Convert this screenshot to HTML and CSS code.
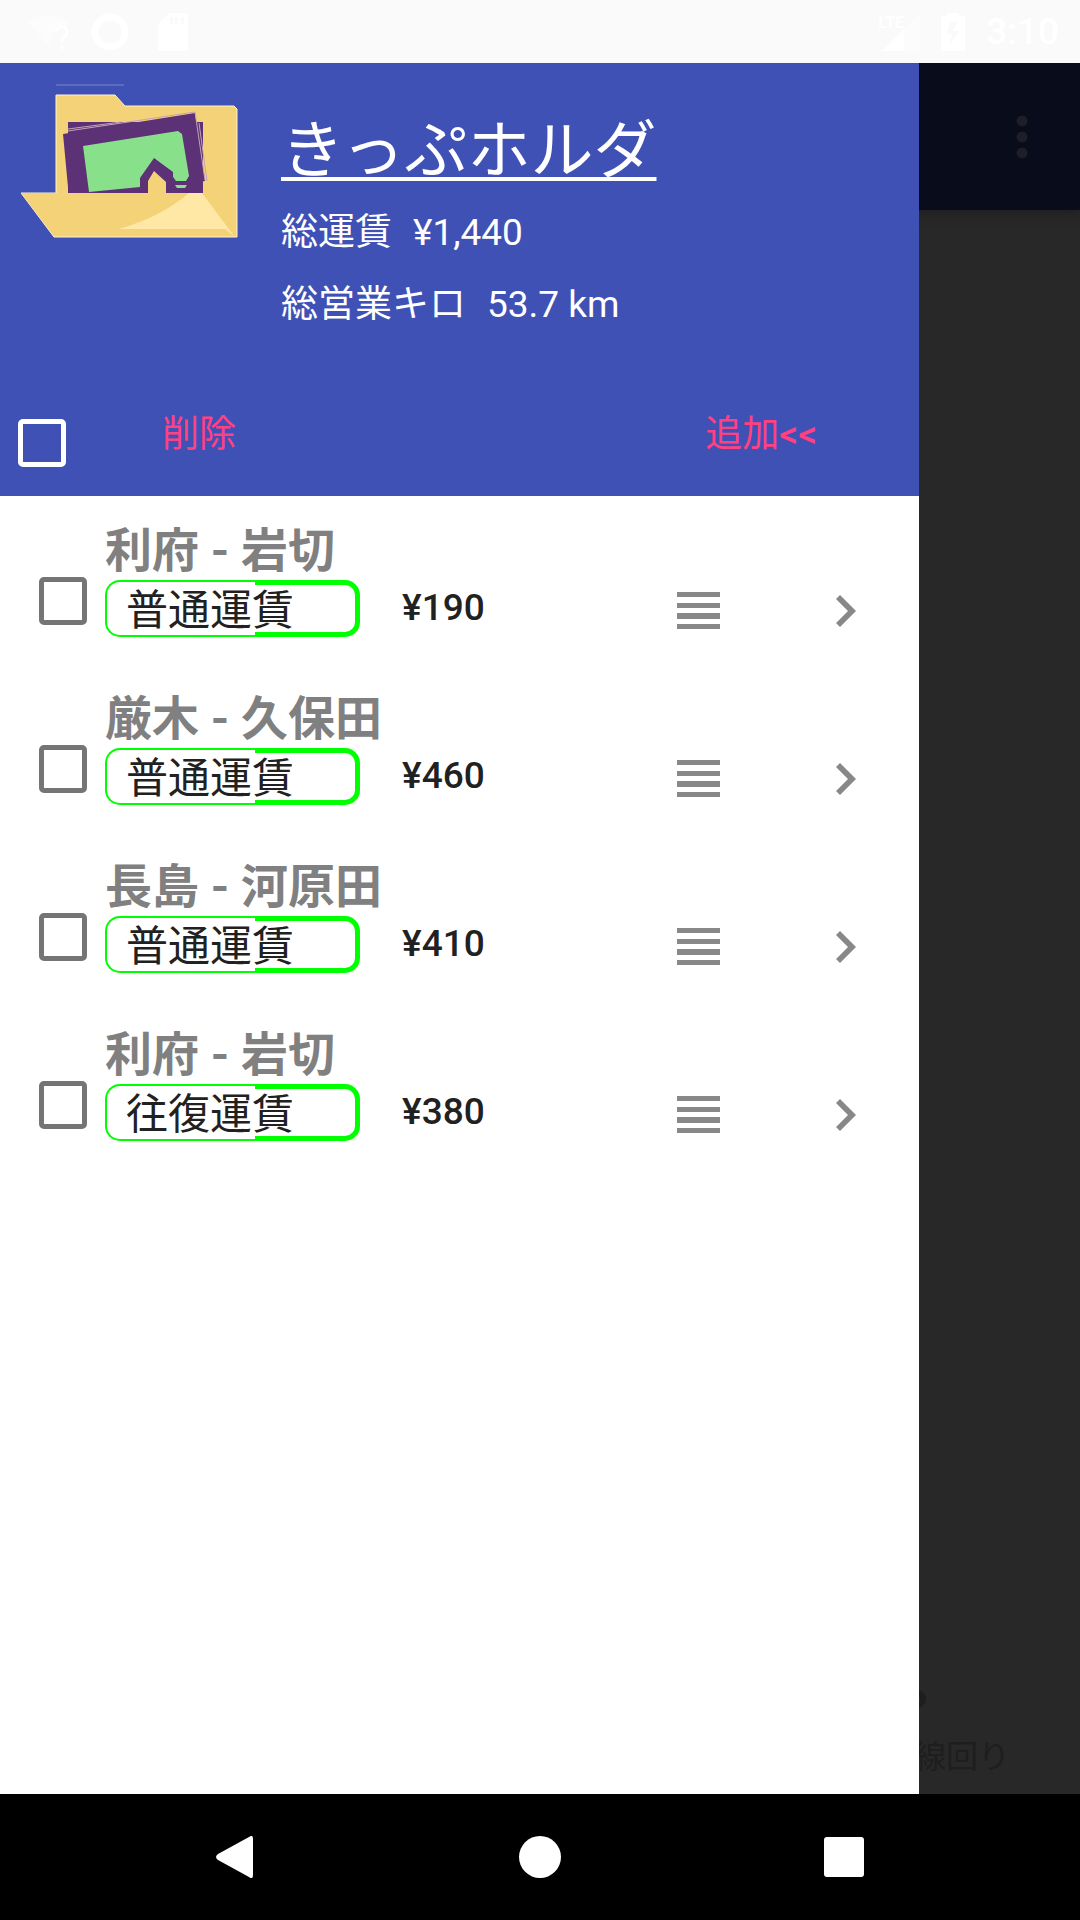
FILE: index.html
```html
<!DOCTYPE html>
<html lang="ja">
<head>
<meta charset="utf-8">
<meta name="viewport" content="width=device-width, initial-scale=1">
<title>きっぷホルダ</title>
<link rel="stylesheet" href="styles.css">
</head>
<body>
<svg class="defs" width="0" height="0" aria-hidden="true">
  <symbol id="handle" viewBox="0 0 43 38"><path d="M0 0h43v5H0zM0 11h43v5H0zM0 21h43v6H0zM0 32h43v5H0z"/></symbol>
  <symbol id="chevron" viewBox="0 0 20 32"><path d="M4 0 20 16 4 32 0 28 12 16 0 4z"/></symbol>
</svg>

<header class="status">
  <div class="status-group status-left">
    <svg width="42" height="36" viewBox="0 0 42 36"><path d="M0 8Q20-5 40 8L36 13Q27 10 26 20L20 32z" opacity=".4"/><path d="M28 18q1-5 6-5t5 5q0 3-3 5t-2 5M34 31v4" fill="none" stroke="#fff" stroke-width="3"/></svg>
    <svg width="38" height="38" viewBox="0 0 38 38"><circle cx="19" cy="19" r="15" fill="none" stroke="#fff" stroke-width="7"/></svg>
    <svg class="sd-card" width="30" height="38" viewBox="0 0 30 38"><path fill-rule="evenodd" d="M11 0h16q3 0 3 3v32q0 3-3 3H3q-3 0-3-3V11zM12 4v7h3V4zM17 4v7h3V4zM23 4v7h3V4z"/></svg>
  </div>
  <div class="status-group status-right">
    <span class="signal"><span class="lte">LTE</span><svg width="38" height="38" viewBox="0 0 38 38"><path d="M38 0v38H0z" opacity=".4"/><path d="M22 16v22H0z"/></svg></span>
    <svg width="24" height="38" viewBox="0 0 24 38"><path fill-rule="evenodd" d="M6 0h12v3h6v35H0V3h6zM9 9 6 21h5L8 33 18 18h-6l5-9z"/></svg>
    <time class="clock">3:10</time>
  </div>
</header>

<div class="app">
  <div class="page">
    <div class="toolbar">
      <button class="icon-button" type="button" aria-label="メニュー"><svg width="12" height="44" viewBox="0 0 12 44"><circle cx="6" cy="6" r="5.500"/><circle cx="6" cy="22" r="5.500"/><circle cx="6" cy="38" r="5.500"/></svg></button>
    </div>
    <div class="page-foot">
      <svg class="option-dot" width="18" height="18" viewBox="0 0 18 18"><circle cx="9" cy="9" r="6" fill="none" stroke-width="6"/></svg>
      <span>線回り</span>
    </div>
  </div>

  <aside class="drawer">
    <div class="drawer-head">
      <div class="summary">
        <svg class="folder" width="219" height="160" viewBox="0 0 219 160">
          <path d="M35 2h68" stroke="#5c6bc0" stroke-width="2"/>
          <path d="M35 12H94l10 11H213l3 3V154H33L0 110H35z" fill="#f4d277" stroke="#fff3cf" stroke-width="1"/>
          <path d="M47 39H182V110H47z" fill="#5d3175"/>
          <path d="M42 51 174 30 184 98 150 104H47z" fill="#5d3175"/>
          <path d="M47 48 174 29 184 97M47 46 100 39M178 40 186 98" fill="none" stroke="#c4a5b4" stroke-width="1"/>
          <path d="M62 63 157 48 161 51 168 93 165 98H155L150 91 134 76 120 94 119 104 68 109z" fill="#89e08a"/>
          <path d="M154 102h12l-2 3h-8z" fill="#89e08a"/>
          <path d="M119 109V95L133 75 152 89V103L146 109V98L134 87 127 99V109z" fill="#5d3175"/>
          <path d="M127 110V98L133 88 145 99V110z" fill="#f4d277"/>
          <path d="M33 153 0 110H181L216 153z" fill="#f4d277"/>
          <path d="M98 146Q140 134 168 110H181L213 153 204 146z" fill="#ffe8a5"/>
        </svg>
        <div class="totals">
          <h1>きっぷホルダ</h1>
          <p><span>総運賃</span><span>¥1,440</span></p>
          <p><span>総営業キロ</span><span>53.7 km</span></p>
        </div>
      </div>
      <div class="actions">
        <input class="check check-light" type="checkbox" aria-label="すべて選択">
        <button class="text-button" type="button">削除</button>
        <button class="text-button text-button-end" type="button">追加<span class="arrows">&lt;&lt;</span></button>
      </div>
    </div>

    <ul class="tickets">
      <li class="ticket">
        <input class="check" type="checkbox" id="t1">
        <label class="route" for="t1">利府 - 岩切</label>
        <div class="fare-line">
          <span class="badge">普通運賃</span>
          <span class="price">¥190</span>
          <button class="icon-button" type="button" aria-label="並べ替え"><svg width="43" height="38"><use href="#handle"/></svg></button>
          <button class="icon-button" type="button" aria-label="開く"><svg width="20" height="32"><use href="#chevron"/></svg></button>
        </div>
      </li>
      <li class="ticket">
        <input class="check" type="checkbox" id="t2">
        <label class="route" for="t2">厳木 - 久保田</label>
        <div class="fare-line">
          <span class="badge">普通運賃</span>
          <span class="price">¥460</span>
          <button class="icon-button" type="button" aria-label="並べ替え"><svg width="43" height="38"><use href="#handle"/></svg></button>
          <button class="icon-button" type="button" aria-label="開く"><svg width="20" height="32"><use href="#chevron"/></svg></button>
        </div>
      </li>
      <li class="ticket">
        <input class="check" type="checkbox" id="t3">
        <label class="route" for="t3">長島 - 河原田</label>
        <div class="fare-line">
          <span class="badge">普通運賃</span>
          <span class="price">¥410</span>
          <button class="icon-button" type="button" aria-label="並べ替え"><svg width="43" height="38"><use href="#handle"/></svg></button>
          <button class="icon-button" type="button" aria-label="開く"><svg width="20" height="32"><use href="#chevron"/></svg></button>
        </div>
      </li>
      <li class="ticket">
        <input class="check" type="checkbox" id="t4">
        <label class="route" for="t4">利府 - 岩切</label>
        <div class="fare-line">
          <span class="badge">往復運賃</span>
          <span class="price">¥380</span>
          <button class="icon-button" type="button" aria-label="並べ替え"><svg width="43" height="38"><use href="#handle"/></svg></button>
          <button class="icon-button" type="button" aria-label="開く"><svg width="20" height="32"><use href="#chevron"/></svg></button>
        </div>
      </li>
    </ul>
  </aside>
</div>

<nav class="navbar">
  <button class="icon-button" type="button" aria-label="戻る"><svg width="42" height="42" viewBox="0 0 42 42"><path d="M34 1Q38-2 38 3V39q0 5-4 2L3 24Q-1 21 3 18z"/></svg></button>
  <button class="icon-button" type="button" aria-label="ホーム"><svg width="42" height="42" viewBox="0 0 42 42"><circle cx="21" cy="21" r="21"/></svg></button>
  <button class="icon-button" type="button" aria-label="履歴"><svg width="42" height="42" viewBox="0 0 42 42"><rect x="1" y="1" width="40" height="40" rx="3"/></svg></button>
</nav>
</body>
</html>
```
FILE: styles.css
```css
*,
*::before,
*::after {
  box-sizing: border-box;
}

body {
  margin: 0;
  min-height: 100vh;
  display: flex;
  flex-direction: column;
  background: #000;
  color: #212121;
  font-family: Roboto, "Noto Sans CJK JP", sans-serif;
  font-size: 37px;
}

svg {
  display: block;
  fill: currentColor;
}

.defs {
  position: absolute;
}

.icon-button,
.text-button {
  margin: 0;
  padding: 0;
  border: 0;
  background: none;
  color: inherit;
  font: inherit;
}

/* Status bar */
.status {
  position: relative;
  z-index: 1;
  display: flex;
  justify-content: space-between;
  align-items: center;
  height: 63px;
  padding: 0 21px 0 28px;
  background: #fafafa;
  color: #fff;
}

.status-group {
  display: flex;
  align-items: center;
  gap: 21px;
}

.sd-card {
  margin-left: 8px;
}

.signal {
  display: flex;
}

.lte {
  margin-right: -22px;
  font-size: 16px;
  line-height: 20px;
  font-weight: 700;
}

.clock {
  font-weight: 500;
}

/* Dimmed page under the drawer */
.app {
  position: relative;
  flex: 1;
  display: flex;
}

.page {
  flex: 1;
  display: flex;
  flex-direction: column;
  justify-content: space-between;
  background: #282828;
  color: #1e1e1e;
}

.toolbar {
  display: flex;
  justify-content: flex-end;
  align-items: center;
  height: 147px;
  padding-right: 52px;
  background: #090c1b;
  color: #1e1e27;
  box-shadow: 0 2px 10px #1c1c1c;
}

.page-foot {
  display: flex;
  flex-direction: column;
  align-items: flex-end;
  gap: 25px;
  padding: 0 70px 13px 0;
  font-size: 32px;
  line-height: 48px;
}

.option-dot {
  margin-right: 84px;
  stroke: currentColor;
}

/* Drawer */
.drawer {
  position: absolute;
  inset: 0 161px 0 0;
  background: #fff;
}

.drawer-head {
  display: flex;
  flex-direction: column;
  justify-content: space-between;
  height: 433px;
  padding: 20px 18px 0;
  background: #3f51b5;
  color: #fff;
}

.summary {
  display: flex;
  gap: 41px;
  padding-left: 3px;
}

.totals {
  padding-top: 28px;
}

.totals h1 {
  margin: 0 0 12px;
  font-size: 63px;
  line-height: 80px;
  font-weight: 400;
  text-decoration: underline;
  text-decoration-thickness: 4px;
  text-decoration-skip-ink: none;
  text-underline-offset: 5px;
}

.totals p {
  display: flex;
  gap: 21px;
  margin: 0 0 12px;
  line-height: 60px;
}

.actions {
  display: flex;
  align-items: flex-start;
  height: 101px;
}

.check {
  appearance: none;
  width: 48px;
  height: 48px;
  margin: 0;
  border: 5px solid #757575;
  border-radius: 5px;
}

.check-light {
  margin-top: 24px;
  border-color: #fff;
}

.text-button {
  height: 80px;
  margin-left: 96px;
  color: #ff4081;
  line-height: 60px;
}

.arrows {
  font-weight: 500;
}

.text-button-end {
  margin: 0 84px 0 auto;
}

/* Ticket list */
.tickets {
  margin: 0;
  padding: 0;
  list-style: none;
}

.ticket {
  display: grid;
  grid-template-columns: 48px 1fr;
  column-gap: 18px;
  padding: 24px 63px 27px 39px;
}

.ticket .check {
  grid-row: 1 / 3;
  align-self: end;
  margin-bottom: 12px;
}

.route {
  height: 60px;
  color: #808080;
  font-size: 47px;
  font-weight: 700;
  line-height: 62px;
}

.fare-line {
  display: flex;
  align-items: center;
  color: #888;
}

.badge {
  position: relative;
  width: 255px;
  height: 57px;
  margin-right: 42px;
  padding-left: 21px;
  color: #212121;
  font-size: 42px;
  line-height: 62px;
}

.badge::before,
.badge::after {
  content: "";
  position: absolute;
  top: 0;
  bottom: 0;
  border: 2px solid #0f0;
}

.badge::before {
  left: 0;
  width: 150px;
  border-right: 0;
  border-radius: 15px 0 0 15px;
}

.badge::after {
  right: 0;
  width: 105px;
  border-width: 5px;
  border-left: 0;
  border-radius: 0 15px 15px 0;
}

.price {
  flex: 1;
  padding-bottom: 2px;
  color: #212121;
  font-weight: 500;
}

.fare-line .icon-button {
  padding-top: 5px;
}

.fare-line .icon-button + .icon-button {
  margin-left: 116px;
}

/* Navigation bar */
.navbar {
  display: flex;
  justify-content: space-between;
  align-items: center;
  height: 126px;
  padding: 0 215px;
  background: #000;
  color: #fff;
}
```
